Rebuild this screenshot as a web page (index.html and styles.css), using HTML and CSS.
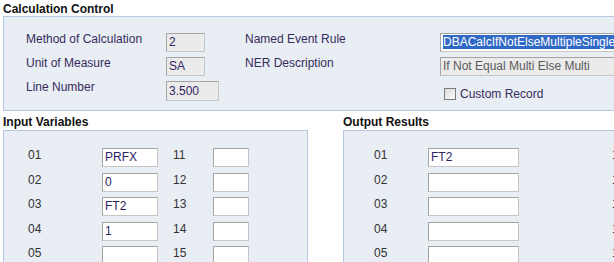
FILE: index.html
```html
<!DOCTYPE html>
<html lang="en">
<head>
    <meta charset="UTF-8">
    <title>Calculation Control</title>
    <link rel="stylesheet" href="styles.css">
</head>
<body>
    <div class="page">
        <h3 class="group-title first">Calculation Control</h3>
        <div class="panel control-panel">
            <span class="ctl-label">Method of Calculation</span>
            <div class="field readonly small">2</div>
            <span class="ctl-label">Named Event Rule</span>
            <div class="field wide"><span class="selected">DBACalcIfNotElseMultipleSingle</span></div>

            <span class="ctl-label">Unit of Measure</span>
            <div class="field readonly small">SA</div>
            <span class="ctl-label">NER Description</span>
            <div class="field readonly wide grey-text">If Not Equal Multi Else Multi</div>

            <span class="ctl-label">Line Number</span>
            <div class="field readonly medium tall">3.500</div>
            <span></span>
            <label class="check-row"><span class="checkbox"></span>Custom Record</label>
        </div>

        <div class="lower">
            <div class="group input-group">
                <h3 class="group-title">Input Variables</h3>
                <div class="panel vars-panel input-vars">
                    <span class="num">01</span><div class="field">PRFX</div><span class="num">11</span><div class="field"></div>
                    <span class="num">02</span><div class="field">0</div><span class="num">12</span><div class="field"></div>
                    <span class="num">03</span><div class="field">FT2</div><span class="num">13</span><div class="field"></div>
                    <span class="num">04</span><div class="field">1</div><span class="num">14</span><div class="field"></div>
                    <span class="num">05</span><div class="field"></div><span class="num">15</span><div class="field"></div>
                </div>
            </div>
            <div class="group output-group">
                <h3 class="group-title">Output Results</h3>
                <div class="panel vars-panel output-vars">
                    <span class="num">01</span><div class="field">FT2</div><span class="num">11</span><div class="field"></div>
                    <span class="num">02</span><div class="field"></div><span class="num">12</span><div class="field"></div>
                    <span class="num">03</span><div class="field"></div><span class="num">13</span><div class="field"></div>
                    <span class="num">04</span><div class="field"></div><span class="num">14</span><div class="field"></div>
                    <span class="num">05</span><div class="field"></div><span class="num">15</span><div class="field"></div>
                </div>
            </div>
        </div>
    </div>
</body>
</html>
```

FILE: styles.css
```css
body {
    margin: 0;
    font-family: 'Liberation Sans', Arial, sans-serif;
    font-size: 12px;
    color: #333;
    background: #fff;
    overflow: hidden;
}
.page {
    width: 780px;
    padding-left: 3px;
}
.group-title {
    margin: 0;
    padding-top: 4px;
    font-size: 12px;
    line-height: 15px;
    font-weight: bold;
    color: #111;
}
.group-title.first {
    padding-top: 2px;
    line-height: 14px;
}
.panel {
    background: #e9edf4;
    border: 1px solid #b5c8de;
}
.control-panel {
    display: grid;
    grid-template-columns: 140px 79px 195px 1fr;
    grid-template-rows: 19px 19px 20px;
    row-gap: 5px;
    padding: 16px 0 9px 22px;
    border-right: none;
}
.ctl-label {
    line-height: 12px;
    color: #352c5c;
}
.field {
    box-sizing: border-box;
    height: 19px;
    padding: 0 2px;
    line-height: 17px;
    background: #fff;
    border: 1px solid #c6c6c6;
    border-top-color: #a4a4a4;
    border-left-color: #a4a4a4;
    color: #2f2464;
    white-space: nowrap;
    overflow: hidden;
}
.field.readonly {
    background: #ebebeb;
}
.field.small {
    width: 39px;
}
.field.medium {
    width: 53px;
}
.field.tall {
    height: 20px;
    line-height: 18px;
}
.field.wide {
    border-right: none;
}
.field.grey-text {
    color: #5a5a5a;
}
.selected {
    background: #3169c6;
    color: #fff;
}
.check-row {
    display: flex;
    align-items: center;
    gap: 4px;
    padding: 6px 0 0 4px;
    line-height: 14px;
    color: #352c5c;
}
.checkbox {
    box-sizing: border-box;
    width: 12px;
    height: 12px;
    border: 1px solid #7b7b7b;
    background: linear-gradient(135deg, #dcdcdc, #fafafa);
}
.lower {
    display: flex;
    gap: 35px;
}
.input-group {
    width: 305px;
}
.output-group {
    width: 420px;
}
.vars-panel {
    display: grid;
    grid-auto-rows: 19px;
    row-gap: 5.5px;
    padding-top: 17px;
    padding-bottom: 10px;
}
.input-vars {
    grid-template-columns: 74px 71px 40px 36px;
    padding-left: 24px;
}
.input-vars .field {
    width: 56px;
}
.input-vars .field:nth-child(4n) {
    width: 36px;
}
.output-vars {
    grid-template-columns: 54px 184px 40px 80px;
    padding-left: 30px;
    border-right: none;
}
.output-vars .field {
    width: 91px;
}
.num {
    line-height: 12px;
    padding-top: 1px;
    color: #333;
}
```
